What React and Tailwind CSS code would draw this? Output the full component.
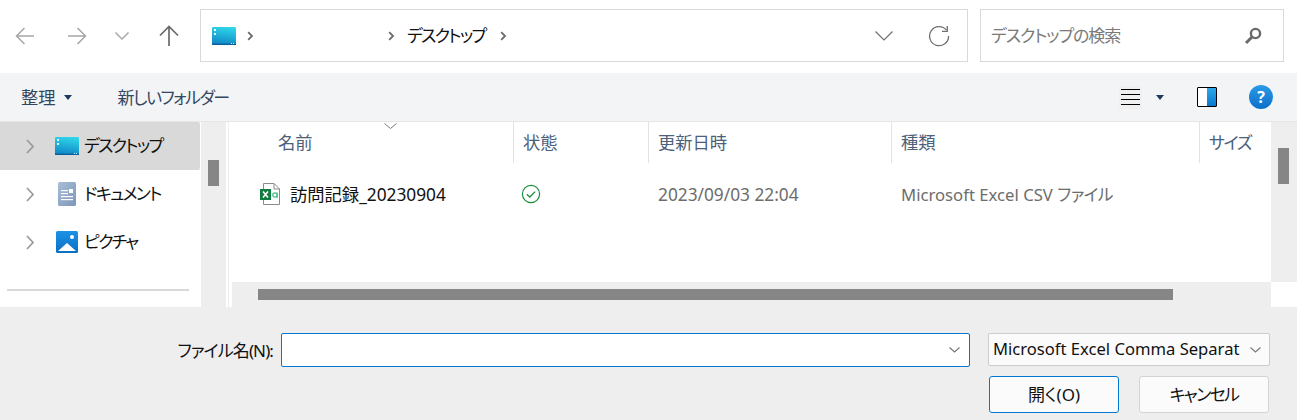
import React from "react";

const Chev = ({ cls = "" }) => (
  <svg width="7" height="10" viewBox="0 0 7 10" className={cls} fill="none"><path d="M1.2 1.2l3.8 3.8-3.8 3.8" stroke="#6a6a6a" strokeWidth="1.8" /></svg>
);

const NavChev = () => (
  <svg width="8" height="15" viewBox="0 0 8 15" fill="none"><path d="M1 1l6 6.5L1 14" stroke="#9a9a9a" strokeWidth="1.7" /></svg>
);

const DownChev = ({ w = 16, h = 9, c = "#6f6f6f", s = 1.2, cls = "" }) => (
  <svg width={w} height={h} viewBox={`0 0 ${w} ${h}`} className={cls} fill="none"><path d={`M0.5 0.5L${w / 2} ${h - 1}L${w - 0.5} 0.5`} stroke={c} strokeWidth={s} /></svg>
);

const Arrow = ({ c, s = 1.5, flip }) => (
  <svg width="20" height="18" viewBox="0 0 20 18" fill="none" style={flip ? { transform: "scaleX(-1)" } : undefined}>
    <path d="M9.5 1L1.5 9l8 8M1.5 9H19" stroke={c} strokeWidth={s} />
  </svg>
);

const DesktopIcon = () => (
  <svg width="24" height="18" viewBox="0 0 24 18">
    <defs>
      <linearGradient id="dk" x1="0.6" y1="0" x2="0.4" y2="1">
        <stop offset="0" stopColor="#2fd6e8" />
        <stop offset="1" stopColor="#0f86c6" />
      </linearGradient>
    </defs>
    <rect width="24" height="18" rx="1.2" fill="url(#dk)" />
    <rect y="16.6" width="24" height="1.4" fill="#0a5f9e" />
    <rect x="2" y="2" width="2" height="2" fill="#e8fbff" />
    <rect x="2" y="6" width="2" height="2" fill="#e8fbff" />
    <rect x="19" y="16" width="1" height="1" fill="#cfeefa" />
    <rect x="21" y="16" width="1" height="1" fill="#cfeefa" />
  </svg>
);

const DocIcon = () => (
  <svg width="18" height="24" viewBox="0 0 18 24">
    <defs>
      <linearGradient id="doc" x1="0" y1="0" x2="1" y2="1">
        <stop offset="0" stopColor="#a9bdd6" />
        <stop offset="1" stopColor="#7d98b8" />
      </linearGradient>
    </defs>
    <rect width="18" height="24" rx="1.5" fill="url(#doc)" />
    <rect x="3" y="8" width="7" height="1.2" fill="#fff" />
    <rect x="3" y="11" width="7" height="1.2" fill="#fff" />
    <rect x="3" y="14" width="12" height="1.2" fill="#fff" />
    <rect x="3" y="17" width="12" height="1.2" fill="#fff" />
    <rect x="11" y="7" width="4" height="4" fill="#fff" />
  </svg>
);

const PicIcon = () => (
  <svg width="22" height="22" viewBox="0 0 22 22">
    <defs>
      <linearGradient id="pic" x1="0.5" y1="0" x2="0.5" y2="1">
        <stop offset="0" stopColor="#1b93e6" />
        <stop offset="1" stopColor="#0b6fc4" />
      </linearGradient>
    </defs>
    <rect width="22" height="22" rx="1.5" fill="url(#pic)" />
    <circle cx="16" cy="6" r="2" fill="#fff" />
    <path d="M2 20L11 12l9 8z" fill="#fff" />
  </svg>
);

const ExcelIcon = () => (
  <svg width="20" height="22" viewBox="0 0 20 22">
    <path d="M3.5 .5H14L19.5 6V21.5H3.5z" fill="#fff" stroke="#8a8a8a" />
    <path d="M14 .5V6H19.5" fill="none" stroke="#8a8a8a" />
    <rect y="6" width="11" height="11" fill="#107c41" />
    <path d="M3 8.5l5 6M8 8.5l-5 6" stroke="#fff" strokeWidth="1.6" />
    <circle cx="15" cy="12" r="2.2" fill="none" stroke="#3fc184" strokeWidth="1.2" />
    <path d="M17.2 9.5V15" stroke="#3fc184" strokeWidth="1.1" />
  </svg>
);

const NavRow = ({ icon, label, selected }) => (
  <div className={`flex h-12 w-[200px] items-center pl-[26px] rounded-r-[2px] ${selected ? "bg-[#d9d9d9]" : ""}`}>
    <NavChev />
    <div className="ml-[19px] flex w-[28px] justify-center">{icon}</div>
    <span className="ml-[3px] text-[17px] tracking-[-1.7px] text-[#111]">{label}</span>
  </div>
);

const HeadCell = ({ w, children, border = true }) => (
  <div className={`flex h-[41px] items-center pl-[9px] text-[17.3px] text-[#4c607a] ${w} ${border ? "border-r border-[#e3e3e3]" : ""}`}>{children}</div>
);

export default function App() {
  return (
    <div className="flex h-[420px] w-[1297px] flex-col overflow-hidden bg-white font-['Noto_Sans','Noto_Sans_CJK_JP',sans-serif] [font-feature-settings:'palt']">
      {/* top bar */}
      <div className="flex h-[73px] shrink-0 items-center pb-[2px]">
        <div className="flex h-12 w-12 items-center justify-center pl-[1px]"><Arrow c="#a6a6a6" /></div>
        <div className="ml-[5px] flex h-12 w-12 items-center justify-center"><Arrow c="#a6a6a6" flip /></div>
        <div className="flex h-12 w-[42px] items-center justify-center"><DownChev w={14} h={8} c="#b0b0b0" s={1.6} /></div>
        <div className="flex h-12 w-[52px] items-center justify-center">
          <svg width="20" height="21" viewBox="0 0 20 21" fill="none"><path d="M1 10.5L10 1.5l9 9M10 1.5V21" stroke="#6a6a6a" strokeWidth="1.7" /></svg>
        </div>
        <div className="ml-[5px] flex h-[53px] w-[768px] items-center border border-[#d9d9d9] pl-[11px] pr-[17px]">
          <DesktopIcon />
          <Chev cls="ml-[11px]" />
          <Chev cls="ml-[134px]" />
          <span className="ml-[12px] text-[17px] tracking-[-1.7px] text-[#111]">デスクトップ</span>
          <Chev cls="ml-[15px]" />
          <DownChev cls="ml-auto" w={18} h={10} />
          <svg className="ml-[35px]" width="22" height="22" viewBox="0 0 22 22" fill="none">
            <path d="M18.5 5.2A9.5 9.5 0 1 0 20.6 11" stroke="#707070" strokeWidth="1.3" />
            <path d="M19.3 1V6.3H14" stroke="#707070" strokeWidth="1.3" />
          </svg>
        </div>
        <div className="ml-[12px] flex h-[53px] w-[304px] items-center justify-between border border-[#d9d9d9] pl-[10px] pr-[21px]">
          <span className="text-[17px] tracking-[-1.1px] text-[#7a7a7a]">デスクトップの検索</span>
          <svg width="18" height="18" viewBox="0 0 18 18" fill="none">
            <circle cx="11.5" cy="6.5" r="4.6" stroke="#6a6a6a" strokeWidth="2.4" />
            <path d="M8 10L2 16" stroke="#6a6a6a" strokeWidth="3" />
          </svg>
        </div>
      </div>

      {/* toolbar */}
      <div className="flex h-[49px] shrink-0 items-center justify-between border-b border-[#e6e6e6] bg-[#f3f4f6] pl-[21px] pr-[24px]">
        <div className="flex items-center pt-[1px] text-[17.3px] text-[#33475f]">
          <span>整理</span>
          <svg className="ml-[8px]" width="8" height="5" viewBox="0 0 8 5"><path d="M0 0h8L4 5z" fill="#1e395b" /></svg>
          <span className="ml-[46px] text-[17px] tracking-[-1.5px]">新しいフォルダー</span>
        </div>
        <div className="flex items-center">
          <div className="flex h-[23px] w-[23px] flex-col justify-center gap-[4px] bg-[#f0f0f0] px-[2px]">
            <div className="h-[1px] bg-black" />
            <div className="h-[1px] bg-black" />
            <div className="h-[1px] bg-black" />
            <div className="h-[1px] bg-black" />
          </div>
          <svg className="ml-[14px]" width="8" height="5" viewBox="0 0 8 5"><path d="M0 0h8L4 5z" fill="#1e395b" /></svg>
          <div className="ml-[33px] flex h-[20px] w-[20px] overflow-hidden rounded-[1px] border border-black">
            <div className="w-1/2 bg-white" />
            <div className="w-1/2 bg-gradient-to-b from-[#2ba8ea] to-[#0a78d0]" />
          </div>
          <div className="ml-[32px] flex h-6 w-6 items-center justify-center rounded-full bg-gradient-to-b from-[#2a9ae8] to-[#0a70c8] text-[16px] font-bold text-white">?</div>
        </div>
      </div>

      {/* main */}
      <div className="flex h-[185px] shrink-0">
        <div className="flex w-[201px] shrink-0 flex-col">
          <NavRow selected icon={<DesktopIcon />} label="デスクトップ" />
          <NavRow icon={<DocIcon />} label="ドキュメント" />
          <NavRow icon={<PicIcon />} label="ピクチャ" />
          <div className="ml-[7px] mt-[23px] h-[2px] w-[182px] bg-[#d9d9d9]" />
        </div>
        <div className="w-[25px] shrink-0 bg-[#eeeeee] pl-[7px] pt-[38px]">
          <div className="h-[26px] w-[11px] bg-[#868686]" />
        </div>
        <div className="ml-[2px] w-[1px] shrink-0 bg-[#eeeeee]" />
        <div className="flex min-w-0 flex-1 flex-col">
          <div className="flex h-[160px] shrink-0">
            <div className="relative min-w-0 flex-1">
              <svg className="absolute left-[155px] top-[1px]" width="13" height="6" viewBox="0 0 13 6" fill="none"><path d="M.5 .5l6 5 6-5" stroke="#7a7a7a" /></svg>
              <div className="flex">
                <HeadCell w="w-[285px] pl-[49px]"><span>名前</span></HeadCell>
                <HeadCell w="w-[135px]"><span>状態</span></HeadCell>
                <HeadCell w="w-[243px]"><span>更新日時</span></HeadCell>
                <HeadCell w="w-[308px]"><span>種類</span></HeadCell>
                <HeadCell w="flex-1" border={false}><span className="text-[17px] tracking-[-1.3px]">サイズ</span></HeadCell>
              </div>
              <div className="mt-[8px] flex h-[46px] items-center">
                <div className="flex w-[285px] items-center pl-[31px]">
                  <ExcelIcon />
                  <span className="ml-[10px] pt-[2px] text-[17.3px] text-[#111]">訪問記録_20230904</span>
                </div>
                <div className="flex w-[135px] pl-[7px]">
                  <svg width="20" height="20" viewBox="0 0 20 20" fill="none">
                    <circle cx="10" cy="10" r="8.6" stroke="#1e8e3e" strokeWidth="1.2" />
                    <path d="M5.8 10.2l3 2.8 5.4-5.4" stroke="#1e8e3e" strokeWidth="1.3" />
                  </svg>
                </div>
                <div className="w-[243px] pl-[9px] pt-[2px] text-[17.3px] text-[#6d6d6d]">2023/09/03 22:04</div>
                <div className="pl-[9px] pt-[2px] text-[16.7px] text-[#6d6d6d]">Microsoft Excel CSV <span className="tracking-[-0.5px]">ファイル</span></div>
              </div>
            </div>
            <div className="w-[26px] shrink-0 bg-[#eeeeee] pl-[7px] pt-[26px]">
              <div className="h-[36px] w-[11px] bg-[#868686]" />
            </div>
          </div>
          <div className="flex h-[25px] shrink-0">
            <div className="ml-[3px] flex-1 bg-[#eeeeee] pl-[26px] pt-[7px]">
              <div className="h-[11px] w-[915px] bg-[#868686]" />
            </div>
            <div className="w-[26px] shrink-0 bg-white" />
          </div>
        </div>
      </div>

      {/* bottom */}
      <div className="flex flex-1 flex-col bg-[#eeeeee] text-[17px] text-[#111]">
        <div className="mt-[26px] flex items-start">
          <span className="flex h-[34px] w-[273px] items-center justify-end pt-[2px] tracking-[-0.9px]">ファイル名(N):</span>
          <div className="ml-[8px] flex h-[34px] w-[689px] items-center justify-end rounded-[2px] border border-[#0078d4] bg-white pr-[9px]">
            <DownChev w={11} h={6} c="#7a7a7a" />
          </div>
          <div className="ml-[18px] flex h-[33px] w-[282px] items-center rounded-[2px] border border-[#cccccc] bg-[#fbfbfb] pl-[4px] pr-[8px]">
            <span className="w-[248px] overflow-hidden whitespace-nowrap text-[16.6px]">Microsoft Excel Comma Separated Values</span>
            <DownChev cls="ml-[10px]" w={11} h={6} c="#7a7a7a" />
          </div>
        </div>
        <div className="mt-[9px] flex pl-[989px]">
          <button className="h-[37px] w-[130px] rounded-[3px] border border-[#0078d4] bg-[#fbfbfb] pt-[1px]">開く(O)</button>
          <button className="ml-[20px] h-[37px] w-[130px] rounded-[3px] border border-[#d4d4d4] bg-[#fbfbfb] pt-[1px] tracking-[-1.6px]">キャンセル</button>
        </div>
      </div>
    </div>
  );
}
